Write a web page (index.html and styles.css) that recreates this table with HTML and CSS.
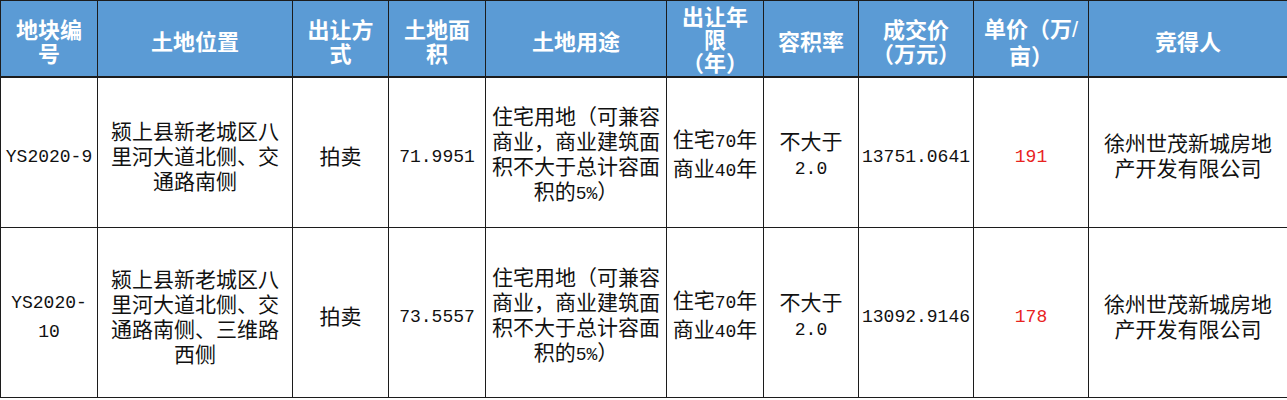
FILE: index.html
```html
<!DOCTYPE html>
<html lang="zh-CN">
<head>
<meta charset="utf-8">
<title>土地出让结果</title>
<link rel="stylesheet" href="styles.css">
</head>
<body>
<table class="land">
  <colgroup>
    <col class="c1"><col class="c2"><col class="c3"><col class="c4"><col class="c5">
    <col class="c6"><col class="c7"><col class="c8"><col class="c9"><col class="c10">
  </colgroup>
  <thead>
    <tr class="head-row">
      <th>地块编<br>号</th>
      <th>土地位置</th>
      <th>出让方<br>式</th>
      <th>土地面<br>积</th>
      <th>土地用途</th>
      <th class="tight">出让年<br>限<br>（年）</th>
      <th>容积率</th>
      <th>成交价<br>（万元）</th>
      <th>单价（万<span class="slash">/</span><br>亩）</th>
      <th>竞得人</th>
    </tr>
  </thead>
  <tbody>
    <tr class="row-a">
      <td><span class="num">YS2020-9</span></td>
      <td>颍上县新老城区八<br>里河大道北侧、交<br>通路南侧</td>
      <td>拍卖</td>
      <td><span class="num">71.9951</span></td>
      <td>住宅用地（可兼容<br>商业，商业建筑面<br>积不大于总计容面<br>积的<span class="num">5%</span>）</td>
      <td>住宅<span class="num">70</span>年<br>商业<span class="num">40</span>年</td>
      <td>不大于<br><span class="num">2.0</span></td>
      <td><span class="num">13751.0641</span></td>
      <td><span class="num red">191</span></td>
      <td>徐州世茂新城房地<br>产开发有限公司</td>
    </tr>
    <tr class="row-b">
      <td><span class="num">YS2020-<br>10</span></td>
      <td>颍上县新老城区八<br>里河大道北侧、交<br>通路南侧、三维路<br>西侧</td>
      <td>拍卖</td>
      <td><span class="num">73.5557</span></td>
      <td>住宅用地（可兼容<br>商业，商业建筑面<br>积不大于总计容面<br>积的<span class="num">5%</span>）</td>
      <td>住宅<span class="num">70</span>年<br>商业<span class="num">40</span>年</td>
      <td>不大于<br><span class="num">2.0</span></td>
      <td><span class="num">13092.9146</span></td>
      <td><span class="num red">178</span></td>
      <td>徐州世茂新城房地<br>产开发有限公司</td>
    </tr>
  </tbody>
</table>
</body>
</html>
```

FILE: styles.css
```css
html, body {
  margin: 0;
  padding: 0;
  background: #ffffff;
}

.land {
  width: 1287px;
  table-layout: fixed;
  border-collapse: collapse;
  font-family: "Noto Sans CJK SC", "Noto Sans", sans-serif;
}

.c1 { width: 97px; }
.c2 { width: 195px; }
.c3 { width: 96px; }
.c4 { width: 97px; }
.c5 { width: 181px; }
.c6 { width: 97px; }
.c7 { width: 95px; }
.c8 { width: 115px; }
.c9 { width: 115px; }
.c10 { width: 199px; }

.land th,
.land td {
  border: 1px solid #1c1c1c;
  text-align: center;
  vertical-align: middle;
  white-space: nowrap;
}

.land th {
  background: #5b9bd5;
  color: #ffffff;
  font-weight: 700;
  font-size: 22px;
  line-height: 24px;
  padding: 4px 1px 0;
  border-bottom: 2px solid #1c1c1c;
}

.land th.tight {
  padding: 0 1px;
  line-height: 23px;
}

.slash {
  font-family: "Liberation Sans", sans-serif;
  font-weight: 400;
}

.head-row { height: 76px; }
.row-a { height: 151px; }
.row-b { height: 170px; }

.land td {
  color: #111111;
  font-size: 21px;
  line-height: 25px;
  font-weight: 400;
  padding: 6px 1px 0;
}

.num {
  font-family: "Liberation Mono", "DejaVu Sans Mono", monospace;
  font-size: 18px;
}

.red {
  color: #e8231f;
}
```
